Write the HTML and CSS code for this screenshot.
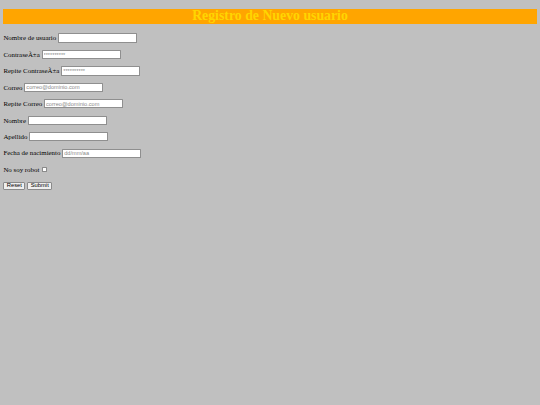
FILE: index.html
```html
<!DOCTYPE html>
<html lang="es">
<head>
<meta charset="utf-8">
<title>Registro de Nuevo usuario</title>
<link rel="stylesheet" href="styles.css">
</head>
<body>
<h1 class="title">Registro de Nuevo usuario</h1>
<form class="form">
  <p class="row"><span>Nombre de usuario</span><input class="field" type="text"></p>
  <p class="row"><span>ContraseÃ±a</span><input class="field" type="password" placeholder="**********"></p>
  <p class="row"><span>Repite ContraseÃ±a</span><input class="field" type="password" placeholder="**********"></p>
  <p class="row"><span>Correo</span><input class="field" type="email" placeholder="correo@dominio.com"></p>
  <p class="row"><span>Repite Correo</span><input class="field" type="email" placeholder="correo@dominio.com"></p>
  <p class="row"><span>Nombre</span><input class="field" type="text"></p>
  <p class="row"><span>Apellido</span><input class="field" type="text"></p>
  <p class="row"><span>Fecha de nacimiento</span><input class="field" type="text" placeholder="dd/mm/aa"></p>
  <p class="row"><span>No soy robot</span><input class="check" type="checkbox"></p>
  <p class="row"><button class="btn" type="reset">Reset</button><button class="btn" type="submit">Submit</button></p>
</form>
</body>
</html>
```

FILE: styles.css
```css
html, body {
  margin: 0;
  background: #c0c0c0;
}
body {
  padding: 9.4px 3.4px 0;
  font-family: "Liberation Serif", "Times New Roman", serif;
  font-size: 6.9px;
  color: #000;
}
.title {
  margin: 0 0 9.4px;
  height: 14.6px;
  line-height: 14.6px;
  background: #ffa500;
  color: #ffd500;
  font-size: 13.8px;
  font-weight: bold;
  text-align: center;
}
.form {
  display: flex;
  flex-direction: column;
  gap: 7.05px;
}
.row {
  margin: 0;
  height: 9.4px;
  line-height: 9.4px;
  display: flex;
  align-items: center;
}
.field {
  box-sizing: border-box;
  width: 79px;
  height: 9.2px;
  margin: 0 0 0 1.8px;
  padding: 0 1px;
  border: 1px solid #8f8f8f;
  border-radius: 0.5px;
  background: #fff;
  font-family: "Liberation Sans", Arial, sans-serif;
  font-size: 5.6px;
  color: #333;
  outline: none;
}
.field::placeholder {
  color: #8a8a8a;
}
.check {
  box-sizing: border-box;
  appearance: none;
  width: 5px;
  height: 5px;
  margin: 0 0 0 3px;
  border: 0.6px solid #8a8a8a;
  border-radius: 0.6px;
  background: #fff;
}
.btn {
  box-sizing: border-box;
  height: 8.4px;
  margin: 0 2px 0 0;
  padding: 0 2.4px;
  border: 0.7px solid #8a8a8a;
  border-radius: 1px;
  background: #efefef;
  font-family: "Liberation Sans", Arial, sans-serif;
  font-size: 5.8px;
  line-height: 1;
  color: #000;
}
```
